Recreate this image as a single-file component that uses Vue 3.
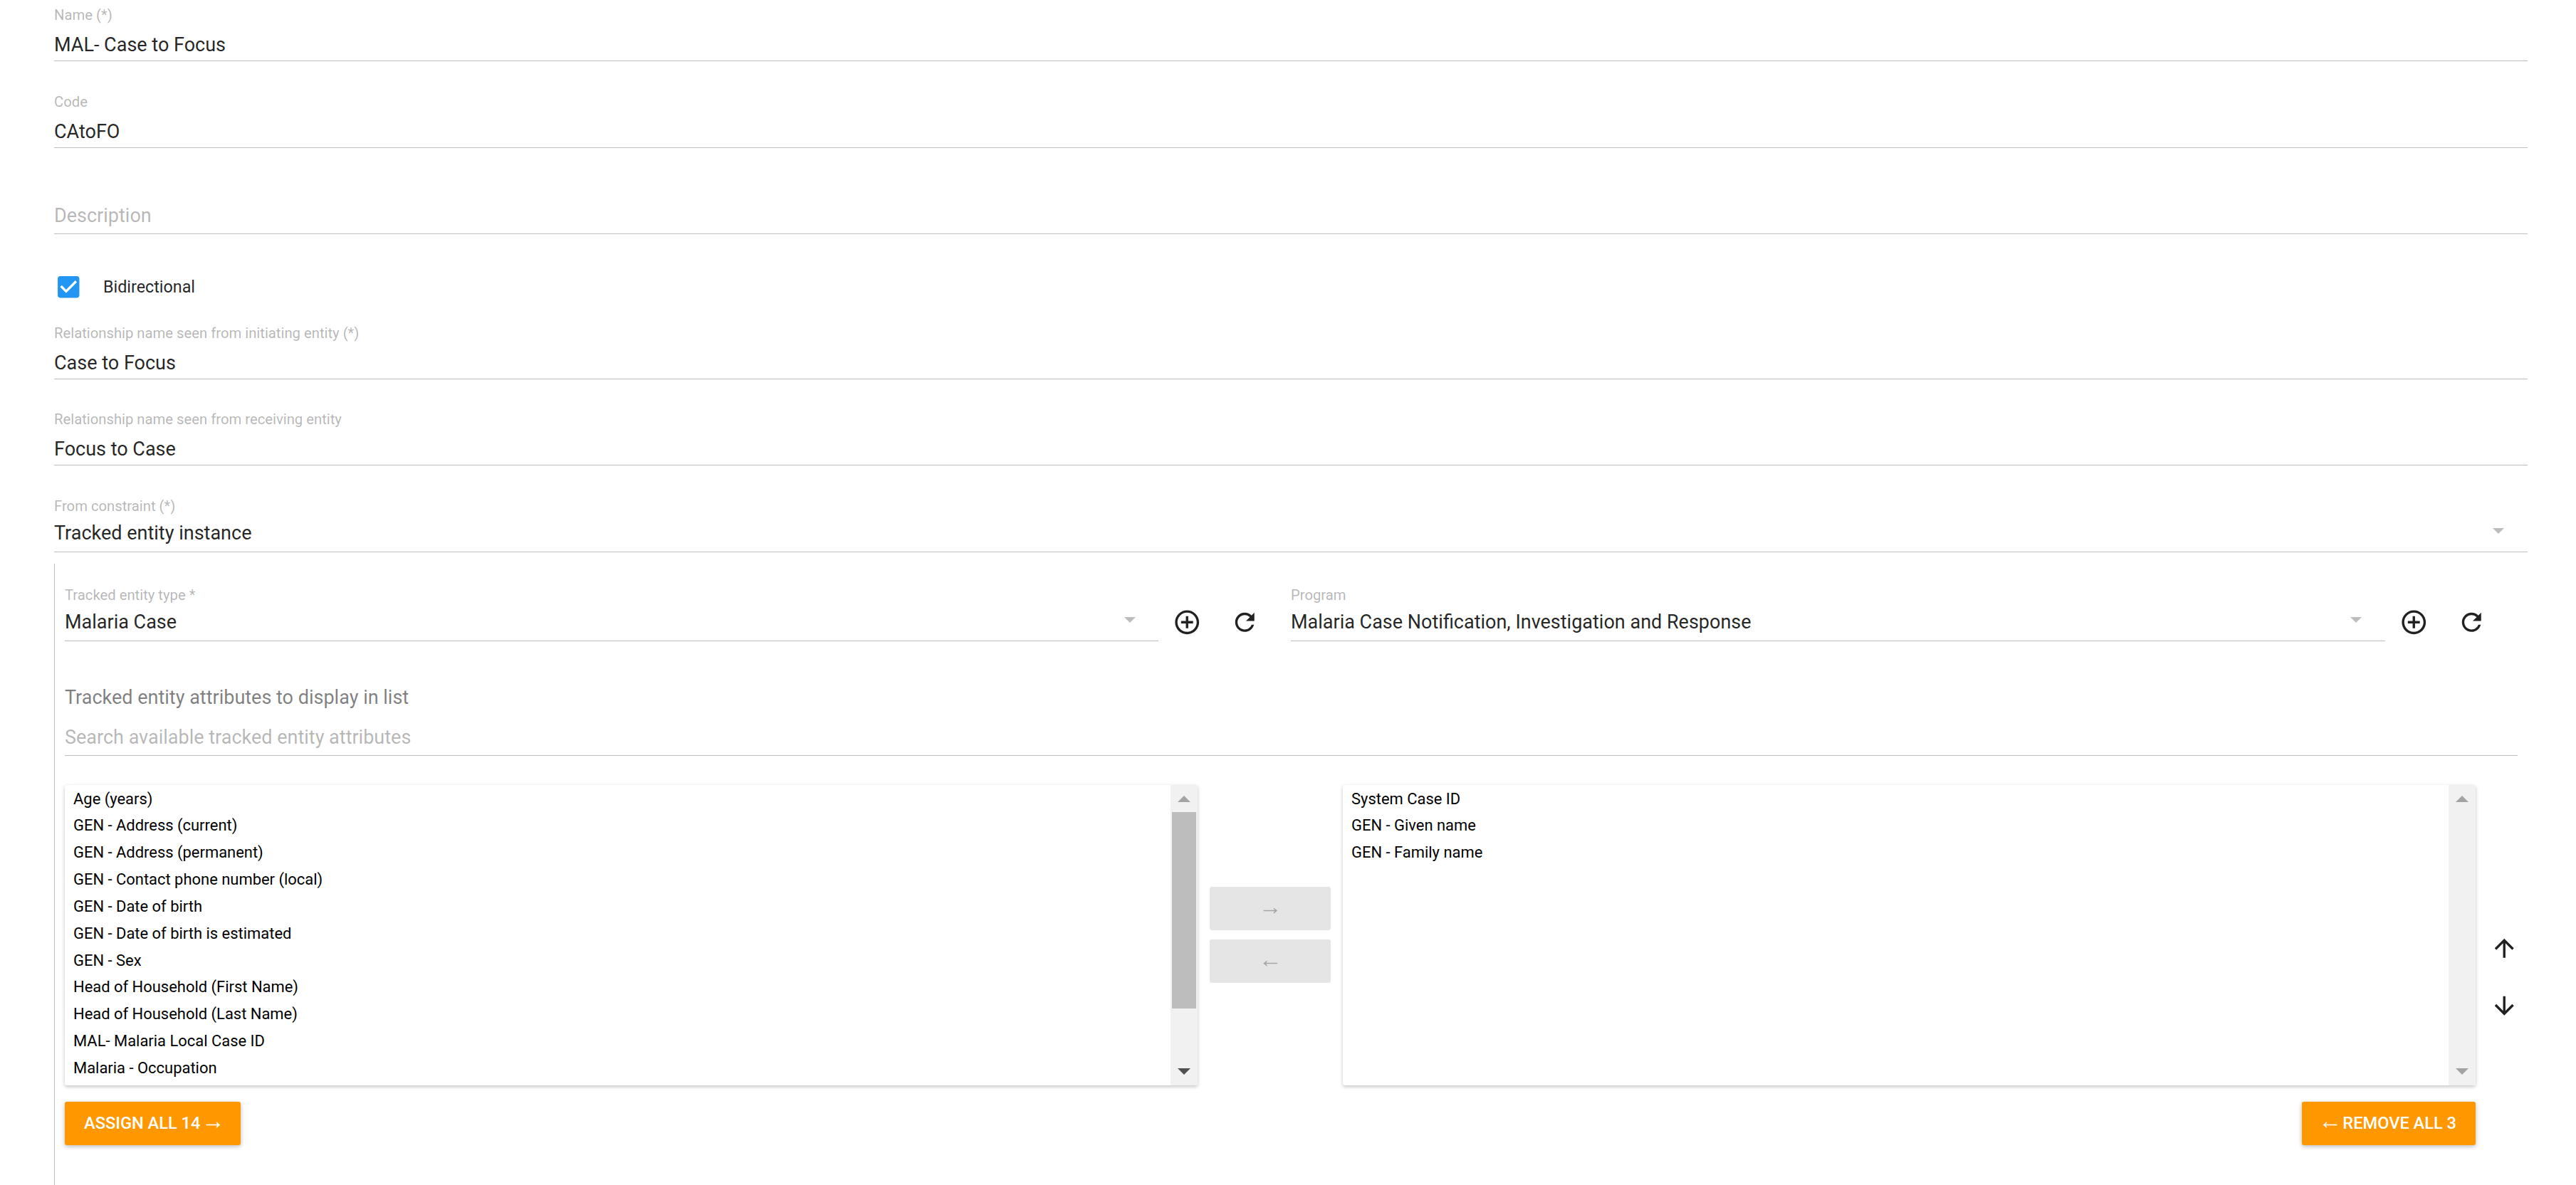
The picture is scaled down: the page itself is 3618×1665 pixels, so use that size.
<script setup>
const available = [
  'Age (years)',
  'GEN - Address (current)',
  'GEN - Address (permanent)',
  'GEN - Contact phone number (local)',
  'GEN - Date of birth',
  'GEN - Date of birth is estimated',
  'GEN - Sex',
  'Head of Household (First Name)',
  'Head of Household (Last Name)',
  'MAL- Malaria Local Case ID',
  'Malaria - Occupation'
]
const assigned = ['System Case ID', 'GEN - Given name', 'GEN - Family name']
const plusPath = 'M13 7h-2v4H7v2h4v4h2v-4h4v-2h-4V7zm-1-5C6.48 2 2 6.48 2 12s4.48 10 10 10 10-4.48 10-10S17.52 2 12 2zm0 18c-4.41 0-8-3.59-8-8s3.59-8 8-8 8 3.59 8 8-3.59 8-8 8z'
const refreshPath = 'M17.65 6.35C16.2 4.9 14.21 4 12 4c-4.42 0-7.99 3.58-7.99 8s3.57 8 7.99 8c3.73 0 6.84-2.55 7.73-6h-2.08c-.82 2.33-3.04 4-5.65 4-3.31 0-6-2.69-6-6s2.69-6 6-6c1.66 0 3.14.69 4.22 1.78L13 11h7V4l-2.35 2.35z'
const topFields = [
  { label: 'Name (*)', value: 'MAL- Case to Focus' },
  { label: 'Code', value: 'CAtoFO' }
]
const relFields = [
  { label: 'Relationship name seen from initiating entity (*)', value: 'Case to Focus' },
  { label: 'Relationship name seen from receiving entity', value: 'Focus to Case' }
]
const selects = [
  { label: 'Tracked entity type *', value: 'Malaria Case', cls: 'sel-a' },
  { label: 'Program', value: 'Malaria Case Notification, Investigation and Response', cls: 'sel-b' }
]
</script>

<template>
  <div class="page">
    <div v-for="f in topFields" :key="f.label" class="field">
      <div class="label">{{ f.label }}</div>
      <div class="value">{{ f.value }}</div>
    </div>
    <div class="field">
      <div class="label"></div>
      <div class="value placeholder">Description</div>
    </div>

    <div class="check-row">
      <svg class="icon" viewBox="0 0 24 24"><path fill="#2196f3" d="M19 3H5c-1.11 0-2 .9-2 2v14c0 1.1.89 2 2 2h14c1.1 0 2-.9 2-2V5c0-1.11-.89-2-2-2zm-9 14l-5-5 1.41-1.41L10 14.17l7.59-7.59L19 8l-9 9z"/></svg>
      <span class="check-label">Bidirectional</span>
    </div>

    <div v-for="f in relFields" :key="f.label" class="field">
      <div class="label">{{ f.label }}</div>
      <div class="value">{{ f.value }}</div>
    </div>

    <div class="field select-field">
      <div class="label">From constraint (*)</div>
      <div class="value select-value">
        <span>Tracked entity instance</span>
        <svg class="caret" viewBox="0 0 16 8"><path fill="#bdbdbd" d="M0 0h16L8 8z"/></svg>
      </div>
    </div>

    <section class="constraint">
      <div class="select-row">
        <template v-for="s in selects" :key="s.label">
          <div class="field select-field" :class="s.cls">
            <div class="label">{{ s.label }}</div>
            <div class="value select-value">
              <span>{{ s.value }}</span>
              <svg class="caret" viewBox="0 0 16 8"><path fill="#bdbdbd" d="M0 0h16L8 8z"/></svg>
            </div>
          </div>
          <div class="icon-btn"><svg class="icon" viewBox="0 0 24 24"><path fill="#212121" :d="plusPath"/></svg></div>
          <div class="icon-btn"><svg class="icon" viewBox="0 0 24 24"><path fill="#212121" :d="refreshPath"/></svg></div>
        </template>
      </div>

      <div class="attr-title">Tracked entity attributes to display in list</div>
      <div class="search">Search available tracked entity attributes</div>

      <div class="lists">
        <div class="list">
          <div class="options">
            <div v-for="o in available" :key="o" class="option">{{ o }}</div>
          </div>
          <div class="scrollbar">
            <svg class="sb-arrow up" viewBox="0 0 18 9"><path fill="#a3a3a3" d="M9 0l9 9H0z"/></svg>
            <div class="thumb"></div>
            <svg class="sb-arrow down" viewBox="0 0 18 9"><path fill="#505050" d="M0 0h18L9 9z"/></svg>
          </div>
        </div>
        <div class="mid">
          <button class="mid-btn" type="button"><span class="arrow">→</span></button>
          <button class="mid-btn" type="button"><span class="arrow">←</span></button>
        </div>
        <div class="list">
          <div class="options">
            <div v-for="o in assigned" :key="o" class="option">{{ o }}</div>
          </div>
          <div class="scrollbar">
            <svg class="sb-arrow up" viewBox="0 0 18 9"><path fill="#a3a3a3" d="M9 0l9 9H0z"/></svg>
            <div class="thumb none"></div>
            <svg class="sb-arrow down" viewBox="0 0 18 9"><path fill="#a3a3a3" d="M0 0h18L9 9z"/></svg>
          </div>
        </div>
        <div class="order">
          <div class="icon-btn"><svg class="icon" viewBox="0 0 24 24"><path fill="#212121" d="M4 12l1.41 1.41L11 7.83V20h2V7.83l5.58 5.59L20 12l-8-8-8 8z"/></svg></div>
          <div class="icon-btn"><svg class="icon" viewBox="0 0 24 24"><path fill="#212121" d="M20 12l-1.41-1.41L13 16.17V4h-2v12.17l-5.58-5.59L4 12l8 8 8-8z"/></svg></div>
        </div>
      </div>

      <div class="actions">
        <button class="action" type="button">ASSIGN ALL 14 <span class="arrow">→</span></button>
        <button class="action" type="button"><span class="arrow">←</span> REMOVE ALL 3</button>
      </div>
    </section>
  </div>
</template>

<style scoped>
.page {
  box-sizing: border-box;
  height: 1665px;
  overflow: hidden;
  padding: 7px 68px 0 76px;
  font-family: Roboto, "Liberation Sans", sans-serif;
  color: rgba(0, 0, 0, 0.87);
  background: #fff;
}
.field {
  margin-bottom: 42.5px;
}
.label {
  height: 28px;
  margin-bottom: 6px;
  line-height: 28px;
  font-size: 20.25px;
  color: rgba(0, 0, 0, 0.3);
  white-space: nowrap;
}
.value {
  box-sizing: border-box;
  height: 45px;
  padding-bottom: 1px;
  line-height: 44px;
  font-size: 27px;
  border-bottom: 1px solid #bdbdbd;
  white-space: nowrap;
}
.placeholder {
  line-height: 38px;
  color: rgba(0, 0, 0, 0.3);
}
.check-row {
  display: flex;
  align-items: center;
  height: 40.5px;
  margin: 54px 0 30px;
}
.check-label {
  margin-left: 28.5px;
  font-size: 23.3px;
}
.icon {
  display: block;
  width: 40.5px;
  height: 40.5px;
  flex: none;
}
.select-value {
  display: flex;
  justify-content: space-between;
  align-items: center;
  padding: 0 33px 8px 0;
  line-height: 36px;
}
.caret {
  width: 16px;
  height: 8px;
  flex: none;
  margin-top: -6px;
}
.select-field {
  margin-bottom: 0;
}
.constraint {
  box-sizing: border-box;
  height: 874px;
  margin-top: 16px;
  padding: 30px 0 0 14px;
  border-left: 1px solid #bdbdbd;
}
.select-row {
  display: flex;
  align-items: flex-end;
}
.sel-a {
  width: 1536px;
  flex: none;
}
.sel-a .value {
  padding-right: 32px;
}
.sel-b {
  width: 1537px;
  flex: none;
  margin-left: 24px;
}
.icon-btn {
  display: flex;
  align-items: center;
  justify-content: center;
  width: 81px;
  height: 81px;
  flex: none;
}
.select-row .icon-btn {
  align-self: flex-end;
  margin-bottom: -14px;
}
.attr-title {
  margin-top: 61px;
  height: 36px;
  line-height: 36px;
  font-size: 27px;
  color: rgba(0, 0, 0, 0.5);
  white-space: nowrap;
}
.search {
  box-sizing: border-box;
  width: 3445px;
  height: 51px;
  margin-top: 13px;
  padding-bottom: 1px;
  line-height: 50px;
  font-size: 27px;
  color: rgba(0, 0, 0, 0.3);
  border-bottom: 1px solid #bdbdbd;
  white-space: nowrap;
}
.lists {
  display: flex;
  margin-top: 41px;
  height: 422px;
}
.list {
  display: flex;
  width: 1591px;
  height: 422px;
  flex: none;
  overflow: hidden;
  border-radius: 3px;
  background: #fff;
  box-shadow: 0 2px 6px rgba(0, 0, 0, 0.12), 0 2px 4px rgba(0, 0, 0, 0.12);
}
.options {
  flex: 1;
  min-width: 0;
  padding: 1px 0 0 12px;
  overflow: hidden;
}
.option {
  height: 37.85px;
  line-height: 37.85px;
  font-size: 21.94px;
  color: #000;
  white-space: nowrap;
}
.scrollbar {
  display: flex;
  flex-direction: column;
  align-items: center;
  width: 38px;
  flex: none;
  background: #f1f1f1;
}
.sb-arrow {
  width: 18px;
  height: 9px;
  flex: none;
}
.sb-arrow.up {
  margin-top: 15px;
}
.thumb {
  width: 34px;
  height: 276px;
  margin-top: 14px;
  background: #bdbdbd;
}
.thumb.none {
  background: transparent;
}
.sb-arrow.down {
  margin-top: 84px;
}
.mid {
  display: flex;
  flex-direction: column;
  justify-content: center;
  gap: 13px;
  width: 204px;
  flex: none;
  align-items: center;
}
.mid-btn {
  width: 170px;
  height: 61px;
  padding: 0;
  border: 0;
  border-radius: 3px;
  background: #e5e5e5;
  color: rgba(0, 0, 0, 0.3);
  font-family: inherit;
  font-size: 23.6px;
  font-weight: 500;
}
.arrow {
  font-family: "Liberation Sans", sans-serif;
  font-size: 33px;
  line-height: 0;
  font-weight: 400;
}
.action .arrow {
  margin: 0 -4.5px;
}
.order {
  display: flex;
  flex-direction: column;
  padding-top: 189px;
}
.actions {
  display: flex;
  justify-content: space-between;
  width: 3386px;
  margin-top: 23px;
}
.action {
  height: 61px;
  padding: 0 27px;
  border: 0;
  border-radius: 3px;
  background: #ff9800;
  color: #fff;
  font-family: inherit;
  font-size: 23.6px;
  font-weight: 500;
  white-space: nowrap;
  box-shadow: 0 2px 6px rgba(0, 0, 0, 0.16), 0 2px 6px rgba(0, 0, 0, 0.12);
}
</style>

<style>
html, body {
  margin: 0;
  background: #fff;
}
</style>
